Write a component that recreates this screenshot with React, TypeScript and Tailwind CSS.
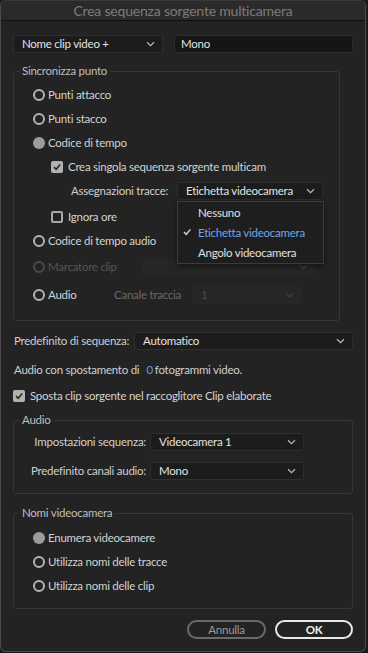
import React from "react";

const FONT = { fontFamily: "Lato, 'Noto Sans', sans-serif" };

function Chevron({ color = "#b8b8b8" }: { color?: string }) {
  return (
    <svg width="9" height="6" viewBox="0 0 9 6" className="shrink-0">
      <path d="M1 1.2 L4.5 4.6 L8 1.2" fill="none" stroke={color} strokeWidth="1.2" />
    </svg>
  );
}

function Select({
  label,
  className = "",
  disabled = false,
  children,
}: {
  label: string;
  className?: string;
  disabled?: boolean;
  children?: React.ReactNode;
}) {
  return (
    <div
      className={`relative shrink-0 h-[18px] flex items-center justify-between pl-[8px] pr-[7px] rounded-[3px] border ${
        disabled ? "bg-[#262626] border-[#272727] text-[#4c4c4c]" : "bg-[#1c1c1c] border-[#2e2e2e] text-[#e2e2e2]"
      } ${className}`}
    >
      <span className="leading-none whitespace-nowrap">{label}</span>
      <Chevron color={disabled ? "#444" : "#b8b8b8"} />
      {children}
    </div>
  );
}

function Radio({ state, label, disabled = false }: { state: "on" | "off"; label: string; disabled?: boolean }) {
  return (
    <div className="flex items-center h-[24px] whitespace-nowrap">
      {state === "on" ? (
        <span className="shrink-0 w-[12px] h-[12px] rounded-full bg-[#9c9c9c]" />
      ) : (
        <span
          className={`shrink-0 w-[12px] h-[12px] rounded-full border-2 ${disabled ? "border-[#4a4a4a]" : "border-[#b4b4b4]"}`}
        />
      )}
      <span className={`ml-[3px] ${disabled ? "text-[#555]" : "text-[#d2d2d2]"}`}>{label}</span>
    </div>
  );
}

function Checkbox({ checked, label }: { checked: boolean; label: string }) {
  return (
    <div className="flex items-center whitespace-nowrap">
      {checked ? (
        <span className="shrink-0 w-[12px] h-[12px] rounded-[2px] bg-[#b2b2b2] flex items-center justify-center">
          <svg width="10" height="10" viewBox="0 0 10 10">
            <path d="M2 5.2 L4.2 7.3 L8.2 2.6" fill="none" stroke="#2a2a2a" strokeWidth="1.6" />
          </svg>
        </span>
      ) : (
        <span className="shrink-0 w-[12px] h-[12px] rounded-[2px] border-2 border-[#a8a8a8]" />
      )}
      <span className="ml-[5px] text-[#d2d2d2]">{label}</span>
    </div>
  );
}

function Group({
  legend,
  className = "",
  children,
}: {
  legend: string;
  className?: string;
  children: React.ReactNode;
}) {
  return (
    <fieldset className={`border border-[#363636] rounded-[3px] ${className}`}>
      <legend className="ml-[5px] px-[3px] h-[16px] leading-[16px] text-[#bfbfbf] whitespace-nowrap">{legend}</legend>
      {children}
    </fieldset>
  );
}

export default function App() {
  return (
    <div className="w-[368px] h-[653px] bg-[#1b1b1b] text-[11.5px] tracking-[-0.25px]" style={FONT}>
      <div className="w-[366px] h-[652px] bg-[#232323] rounded-[6px] border border-[#4a4a4a] border-t-[#3a3a3a] overflow-hidden flex flex-col">
        <div className="h-[20px] shrink-0 bg-[#2a2a2a] border-b border-[#111] flex items-center justify-center text-[14px] tracking-[-0.2px] text-[#7c7c7c]">
          Crea sequenza sorgente multicamera
        </div>

        <div className="px-[12px] flex flex-col">
          <div className="mt-[14px] flex items-center">
            <Select label="Nome clip video +" className="w-[150px]" />
            <div className="ml-[11px] w-[179px] h-[18px] bg-[#151515] border border-[#2c2c2c] rounded-[3px] flex items-center pl-[6px] text-[#e2e2e2]">
              Mono
            </div>
          </div>

          <Group legend="Sincronizza punto" className="mt-[10px] w-[327px] pb-[13px]">
            <div className="pt-[4px] pl-[19px] flex flex-col">
              <Radio state="off" label="Punti attacco" />
              <Radio state="off" label="Punti stacco" />
              <Radio state="on" label="Codice di tempo" />
              <div className="h-[24px] flex items-center pl-[18px]">
                <Checkbox checked label="Crea singola sequenza sorgente multicam" />
              </div>
              <div className="h-[24px] flex items-center pl-[38px]">
                <span className="text-[#cfcfcf] w-[106px] shrink-0 whitespace-nowrap">Assegnazioni tracce:</span>
                <Select label="Etichetta videocamera" className="w-[146px]">
                  <div className="absolute left-[-1px] top-[18px] w-[147px] h-[63px] bg-[#1e1e1e] border border-[#3a3a3a] shadow-[0_2px_6px_rgba(0,0,0,0.5)] flex flex-col z-10">
                    <div className="h-[21px] flex items-center pl-[20px] text-[#e0e0e0]">Nessuno</div>
                    <div className="h-[21px] flex items-center text-[#6ea6e6]">
                      <svg width="20" height="10" viewBox="0 0 20 10" className="shrink-0">
                        <path d="M6 5 L8.2 7.4 L12.4 2.4" fill="none" stroke="#d8d8d8" strokeWidth="1.4" />
                      </svg>
                      <span>Etichetta videocamera</span>
                    </div>
                    <div className="h-[21px] flex items-center pl-[20px] text-[#e0e0e0]">Angolo videocamera</div>
                  </div>
                </Select>
              </div>
              <div className="mt-[2px] h-[24px] flex items-center pl-[18px]">
                <Checkbox checked={false} label="Ignora ore" />
              </div>
              <Radio state="off" label="Codice di tempo audio" />
              <div className="mt-[2px] h-[24px] flex items-center">
                <div className="w-[109px] shrink-0">
                  <Radio state="off" disabled label="Marcatore clip" />
                </div>
                <Select label="" disabled className="w-[174px]" />
              </div>
              <div className="mt-[4px] h-[24px] flex items-center">
                <div className="w-[81px] shrink-0">
                  <Radio state="off" label="Audio" />
                </div>
                <span className="text-[#6a6a6a] w-[78px] shrink-0 whitespace-nowrap">Canale traccia</span>
                <Select label="1" disabled className="w-[110px]" />
              </div>
            </div>
          </Group>

          <div className="mt-[11px] h-[18px] flex items-center">
            <span className="w-[121px] shrink-0 whitespace-nowrap text-[#cfcfcf] pl-[1px]">Predefinito di sequenza:</span>
            <Select label="Automatico" className="flex-1" />
          </div>

          <div className="mt-[12px] h-[16px] flex items-center pl-[1px] text-[#cfcfcf] whitespace-nowrap">
            <span>Audio con spostamento di</span>
            <span className="ml-[7px] text-[#5d9be0]">0</span>
            <span className="ml-[2px]">fotogrammi video.</span>
          </div>

          <div className="mt-[10px] h-[16px] flex items-center">
            <Checkbox checked label="Sposta clip sorgente nel raccoglitore Clip elaborate" />
          </div>

          <Group legend="Audio" className="mt-[8px] pb-[13px]">
            <div className="pt-[5px] flex flex-col gap-[11px]">
              <div className="h-[18px] flex items-center">
                <span className="w-[136px] shrink-0 whitespace-nowrap text-right pr-[4px] text-[#cfcfcf]">Impostazioni sequenza:</span>
                <Select label="Videocamera 1" className="w-[154px]" />
              </div>
              <div className="h-[18px] flex items-center">
                <span className="w-[136px] shrink-0 whitespace-nowrap text-right pr-[4px] text-[#cfcfcf]">Predefinito canali audio:</span>
                <Select label="Mono" className="w-[154px]" />
              </div>
            </div>
          </Group>

          <Group legend="Nomi videocamera" className="mt-[11px] pb-[10px]">
            <div className="pt-[5px] pl-[19px] flex flex-col">
              <Radio state="on" label="Enumera videocamere" />
              <Radio state="off" label="Utilizza nomi delle tracce" />
              <Radio state="off" label="Utilizza nomi delle clip" />
            </div>
          </Group>

          <div className="mt-[11px] flex justify-end gap-[9px]">
            <button className="w-[79px] h-[19px] rounded-full border-2 border-[#6a6a6a] text-[#9a9a9a] flex items-center justify-center leading-none">
              Annulla
            </button>
            <button className="w-[78px] h-[19px] rounded-full border-2 border-[#e8e8e8] text-[#f2f2f2] font-bold flex items-center justify-center leading-none">
              OK
            </button>
          </div>
        </div>
      </div>
    </div>
  );
}
